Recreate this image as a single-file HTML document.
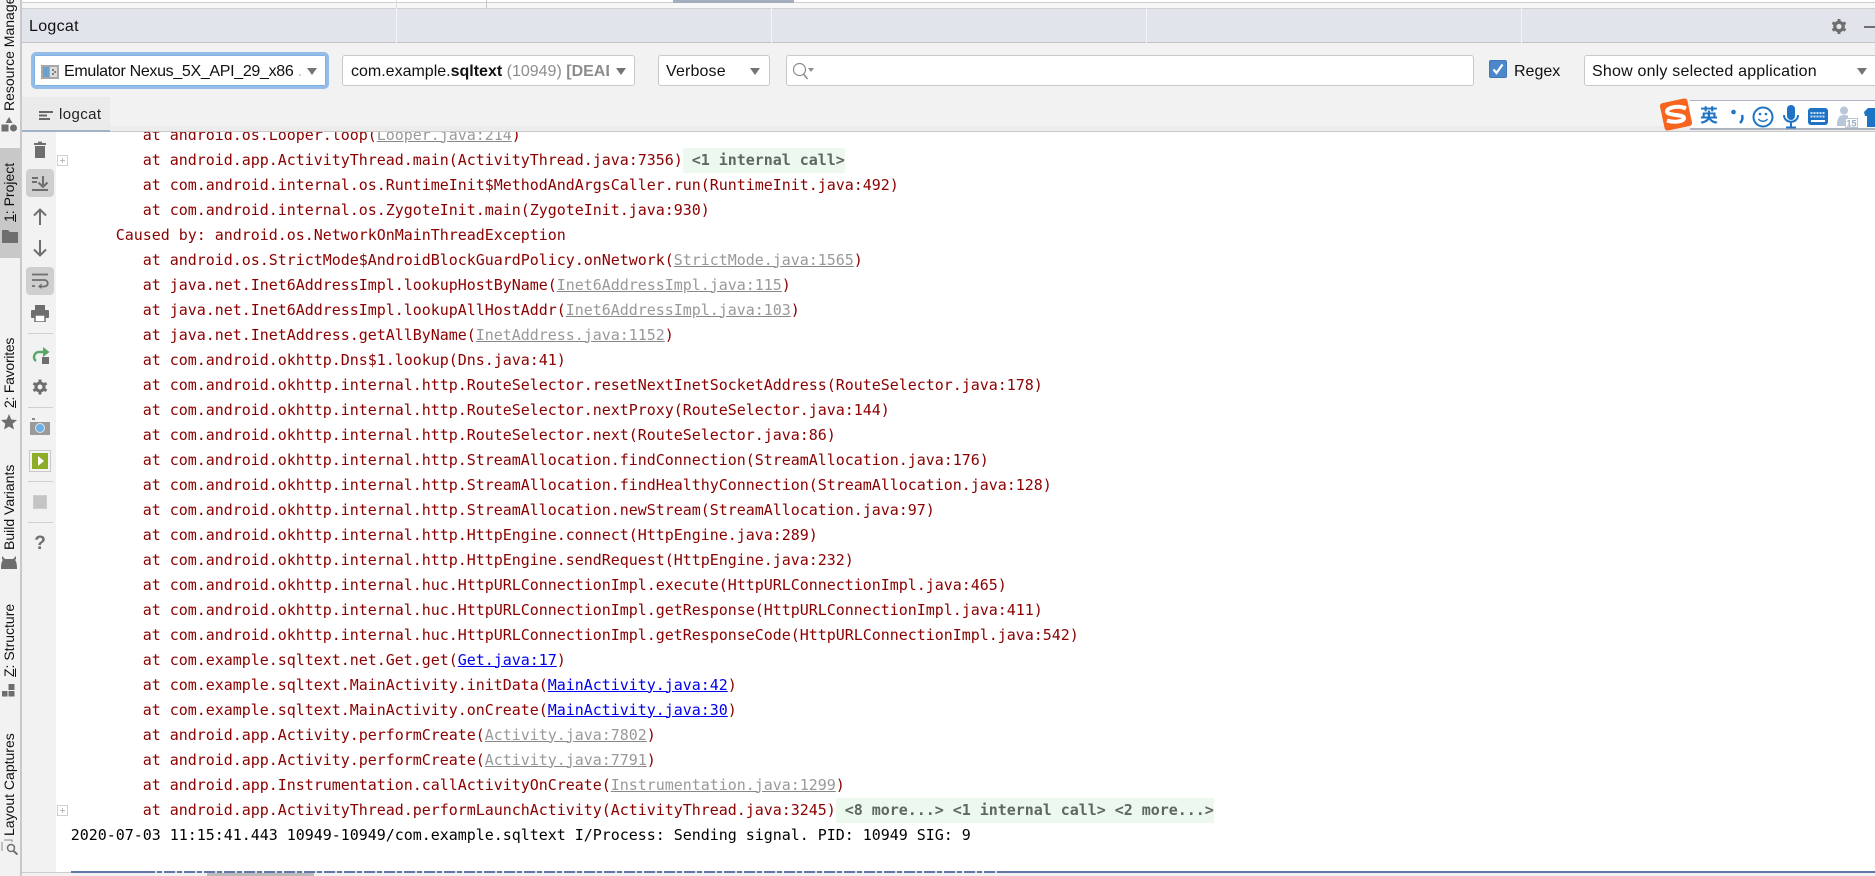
<!DOCTYPE html>
<html><head><meta charset="utf-8"><title>Logcat</title>
<style>
*{box-sizing:border-box}
html,body{margin:0;padding:0;width:1875px;height:876px;overflow:hidden;background:#fff}
body{position:relative;font-family:"Liberation Sans",sans-serif;color:#000}
.a{position:absolute}
.combo{position:absolute;background:#fff;border:1px solid #c9c9c9;border-radius:3px;height:31px;top:55px;font-size:16px;line-height:31px;white-space:nowrap;overflow:hidden}
.arrow{position:absolute;width:0;height:0;border-left:5.5px solid transparent;border-right:5.5px solid transparent;border-top:7px solid #757575;top:68px}
.v{position:absolute;transform-origin:0 0;transform:rotate(-90deg);font-size:14px;line-height:16px;white-space:nowrap;left:1px;color:#111}
.sep{position:absolute;left:28px;width:25px;height:1px;background:#d0d0d0}
#log{position:absolute;left:56px;top:132px;width:1819px;height:739px;overflow:hidden;background:#fff}
#log pre{position:absolute;left:14.8px;top:-9.5px;margin:0;font-family:"DejaVu Sans Mono",monospace;font-size:15px;line-height:25px;letter-spacing:-.031px;color:#8b0000}
#log a{color:#999;text-decoration:underline;text-decoration-color:#888}
#log a.b{color:#0000ee;text-decoration-color:#0000ee}
#log b{display:inline-block;height:25px;background:#edf8ee;color:#5f675f;font-weight:bold;padding:0}
#log i{font-style:normal;color:#000}
.plus{position:absolute;left:57px;width:11px;height:11px;border:1px solid #d0d0d0;background:#fff}
.plus:before{content:"";position:absolute;left:2px;top:4px;width:5px;height:1px;background:#bbb}
.plus:after{content:"";position:absolute;left:4px;top:2px;width:1px;height:5px;background:#bbb}
</style></head><body>

<!-- top strip -->
<div class="a" style="left:0;top:0;width:1875px;height:8px;background:#f7f7f7"></div>
<div class="a" style="left:0;top:0;width:1875px;height:3px;background:#fff;border-bottom:1px solid #cfcfcf"></div>
<div class="a" style="left:673px;top:0;width:121px;height:3px;background:#a2adbd"></div>
<div class="a" style="left:486px;top:0;width:1px;height:8px;background:#c8c8c8"></div>
<div class="a" style="left:396px;top:0;width:1px;height:8px;background:#ddd"></div>

<!-- header -->
<div class="a" style="left:21px;top:8px;width:1854px;height:35px;background:#e1e4eb;border-top:1px solid #cfcfcf;border-bottom:1px solid #c4c4c4"></div>
<div class="a" style="left:396px;top:8px;width:1px;height:35px;background:#f2f3f6"></div>
<div class="a" style="left:771px;top:8px;width:1px;height:35px;background:#f2f3f6"></div>
<div class="a" style="left:1146px;top:8px;width:1px;height:35px;background:#f2f3f6"></div>
<div class="a" style="left:1521px;top:8px;width:1px;height:35px;background:#f2f3f6"></div>
<div class="a" style="left:29px;top:17px;font-size:16px;line-height:20px;color:#111;letter-spacing:.3px">Logcat</div>
<svg class="a" style="left:1830px;top:18px" width="18" height="17" viewBox="0 0 18 17"><g fill="none" stroke="#6e6e6e"><circle cx="9" cy="8.5" r="4.2" stroke-width="3.2"/><path stroke-width="3" d="M9 1v3M9 13v3M2.5 4.7l2.6 1.5M12.9 10.8l2.6 1.5M2.5 12.3l2.6-1.5M12.9 6.2l2.6-1.5"/></g></svg>
<div class="a" style="left:1864px;top:26px;width:11px;height:2px;background:#6e6e6e"></div>

<!-- toolbar -->
<div class="a" style="left:21px;top:43px;width:1854px;height:88px;background:#f2f2f2"></div>

<div class="a" style="left:31px;top:52px;width:298px;height:37px;border:3px solid #93bde8;border-radius:5px;background:#fff;box-shadow:inset 0 0 0 1px #7fb0e3"></div>
<svg class="a" style="left:41px;top:65px" width="18" height="14" viewBox="0 0 18 14"><rect width="18" height="14" fill="#a8a8a8"/><rect x="2" y="2" width="6" height="10" fill="#6aa2cc"/><rect x="9" y="2" width="7" height="10" fill="#dcdcdc"/><circle cx="12" cy="5" r="1" fill="#666"/><circle cx="12" cy="9" r="1" fill="#666"/><circle cx="14" cy="7" r="1" fill="#666"/></svg>
<div class="a" style="left:64px;top:57px;font-size:16px;line-height:29px;white-space:nowrap;color:#111;letter-spacing:-.32px">Emulator Nexus_5X_API_29_x86 <span style="color:#bbb">.</span></div>
<div class="arrow" style="left:307px"></div>

<div class="combo" style="left:342px;width:293px;padding-left:8px;color:#111"><span style="display:inline-block;width:258px;overflow:hidden;vertical-align:top">com.example.<b>sqltext</b> <span style="color:#8c8c8c">(10949)</span> <b style="color:#8c8c8c">[DEAD]</b></span></div>
<div class="arrow" style="left:616px"></div>

<div class="combo" style="left:658px;width:112px;padding-left:7px;color:#111;letter-spacing:.15px">Verbose</div>
<div class="arrow" style="left:750px"></div>

<div class="combo" style="left:786px;width:688px"></div>
<svg class="a" style="left:792px;top:62px" width="22" height="18" viewBox="0 0 22 18"><circle cx="7.5" cy="7.5" r="6" fill="none" stroke="#8c8c8c" stroke-width="1.2"/><path d="M11.5 12l4 5" stroke="#8c8c8c" stroke-width="1.5"/><path d="M16 6h6l-3 4z" fill="#8c8c8c"/></svg>

<div class="a" style="left:1489px;top:60px;width:18px;height:18px;background:#4c87c9;border-radius:2px;border:1px solid #3f78b8"></div>
<svg class="a" style="left:1489px;top:60px" width="18" height="18" viewBox="0 0 18 18"><path d="M4.5 9.500l3 3.500 6-8.500" fill="none" stroke="#fff" stroke-width="2.200"/></svg>
<div class="a" style="left:1514px;top:57px;font-size:16px;line-height:29px;color:#111">Regex</div>

<div class="combo" style="left:1584px;width:300px;padding-left:7px;color:#111;letter-spacing:.2px">Show only selected application</div>
<div class="arrow" style="left:1857px"></div>

<!-- tab -->
<div class="a" style="left:22px;top:97px;width:88px;height:34px;background:#ebebeb"></div>
<div class="a" style="left:21px;top:131px;width:1854px;height:1px;background:#c9c9c9"></div>
<div class="a" style="left:22px;top:130px;width:88px;height:2px;background:#a2b2c8"></div>
<div class="a" style="left:110px;top:126px;width:1765px;height:5px;background:#ececec"></div>
<svg class="a" style="left:39px;top:110px" width="14" height="12" viewBox="0 0 14 12"><path d="M0 2h14M0 5.500h8M0 9h11" stroke="#666" stroke-width="2"/></svg>
<div class="a" style="left:59px;top:105px;font-size:15px;line-height:20px;color:#222;letter-spacing:.4px">logcat</div>

<!-- left strip -->
<div class="a" style="left:0;top:0;width:20px;height:876px;background:#f2f2f2"></div>
<div class="a" style="left:20px;top:0;width:2px;height:876px;background:#c9c9c9"></div>
<div class="a" style="left:0;top:148px;width:20px;height:110px;background:#c8c8c8"></div>
<div class="a" style="left:22px;top:132px;width:34px;height:744px;background:#f2f2f2"></div>

<div class="v" style="top:111px">Resource Manager</div>
<svg class="a" style="left:1px;top:117px" width="16" height="15" viewBox="0 0 16 15"><path d="M8 0l3.500 6h-7z" fill="#6e6e6e"/><circle cx="12.500" cy="11" r="3.500" fill="#6e6e6e"/><rect x="0.500" y="7.500" width="7" height="7" fill="#6e6e6e"/></svg>
<div class="v" style="top:222px"><span style="text-decoration:underline">1</span>: Project</div>
<svg class="a" style="left:2px;top:230px" width="16" height="13" viewBox="0 0 16 13"><path d="M0 0h6l2 2h8v11H0z" fill="#6e6e6e"/></svg>
<div class="v" style="top:408px;letter-spacing:-.25px"><span style="text-decoration:underline">2</span>: Favorites</div>
<svg class="a" style="left:1px;top:414px" width="16" height="16" viewBox="0 0 16 16"><path d="M8 0l2.300 5.500 5.700.5-4.300 3.800 1.300 5.700-5-3-5 3 1.300-5.700L0 6l5.700-.5z" fill="#6e6e6e"/></svg>
<div class="v" style="top:550px">Build Variants</div>
<svg class="a" style="left:1px;top:556px" width="16" height="13" viewBox="0 0 16 13"><path d="M1 0l3 3h8l3-3v3l-1 1c1 1 2 3 2 9H0c0-6 1-8 2-9L1 3z" fill="#6e6e6e"/></svg>
<div class="v" style="top:836px">Layout Captures</div>
<div class="v" style="top:677px"><span style="text-decoration:underline">Z</span>: Structure</div>
<svg class="a" style="left:2px;top:684px" width="13" height="13" viewBox="0 0 13 13"><rect x="6.500" y="0" width="6" height="6" fill="#6e6e6e"/><rect x="0" y="7" width="5.500" height="5.500" fill="#6e6e6e"/><rect x="6.500" y="7" width="6" height="5.500" fill="#6e6e6e"/></svg>
<svg class="a" style="left:1px;top:839px" width="17" height="16" viewBox="0 0 17 16"><path d="M3 1h8v2M1 3v9" fill="none" stroke="#8a8a8a"/><circle cx="10" cy="9" r="3.500" fill="none" stroke="#6e6e6e" stroke-width="1.500"/><path d="M12.500 12l4 3.500" stroke="#6e6e6e" stroke-width="2"/></svg>

<!-- tool icons -->
<svg class="a" style="left:33px;top:141px" width="14" height="17" viewBox="0 0 14 17"><path d="M1 2h4V.6h4V2h4v2H1z M2 5h10v12H2z" fill="#6e6e6e"/></svg>
<div class="a" style="left:26px;top:169px;width:28px;height:28px;background:#cfcfcf;border-radius:4px"></div>
<svg class="a" style="left:32px;top:176px" width="16" height="15" viewBox="0 0 16 15"><path d="M0 2h6M0 6h5M0 14h16" stroke="#6e6e6e" stroke-width="2"/><path d="M11 0v9" stroke="#6e6e6e" stroke-width="2"/><path d="M6.500 6.500L11 11l4.500-4.500" fill="none" stroke="#6e6e6e" stroke-width="2"/></svg>
<svg class="a" style="left:33px;top:208px" width="14" height="17" viewBox="0 0 14 17"><path d="M7 1.500V17M1 7.500l6-6 6 6" fill="none" stroke="#6e6e6e" stroke-width="2"/></svg>
<svg class="a" style="left:33px;top:240px" width="14" height="17" viewBox="0 0 14 17"><path d="M7 0v15.500M1 9.500l6 6 6-6" fill="none" stroke="#6e6e6e" stroke-width="2"/></svg>
<div class="a" style="left:26px;top:267px;width:28px;height:28px;background:#cfcfcf;border-radius:4px"></div>
<svg class="a" style="left:32px;top:273px" width="17" height="16" viewBox="0 0 17 16"><path d="M0 1.500h16M0 7h12.500a3 3 0 0 1 0 6.500H7M0 13h3" fill="none" stroke="#6e6e6e" stroke-width="1.800"/><path d="M9.500 10.500l-3.500 3 3.500 2.500z" fill="#6e6e6e"/></svg>
<svg class="a" style="left:31px;top:305px" width="18" height="17" viewBox="0 0 18 17"><rect x="4" y="0" width="10" height="5" fill="#6e6e6e"/><rect x="0" y="5" width="18" height="8" rx="1" fill="#6e6e6e"/><rect x="4" y="10" width="10" height="7" fill="#fff" stroke="#6e6e6e" stroke-width="1.500"/></svg>
<div class="sep" style="top:333px"></div>
<svg class="a" style="left:32px;top:347px" width="18" height="18" viewBox="0 0 18 18"><path d="M12 5H7a5 5 0 0 0-3 9" fill="none" stroke="#59a869" stroke-width="2.500"/><path d="M11 0l6.500 5L11 10z" fill="#59a869"/><rect x="10" y="10" width="7" height="7" fill="#6e6e6e"/></svg>
<svg class="a" style="left:32px;top:379px" width="16" height="16" viewBox="0 0 18 18"><g fill="none" stroke="#6e6e6e"><circle cx="9" cy="9" r="4.500" stroke-width="3.500"/><path stroke-width="3.200" d="M9 .5v4M9 13.500v4M1.600 4.750l3.500 2M12.900 11.250l3.500 2M1.600 13.250l3.500-2M12.900 6.750l3.500-2"/></g></svg>
<div class="sep" style="top:407px"></div>
<svg class="a" style="left:30px;top:418px" width="20" height="17" viewBox="0 0 20 17"><path d="M2 0h3v2H2z" fill="#8a8a8a"/><rect x="0" y="4" width="20" height="13" fill="#9a9a9a"/><circle cx="10" cy="10" r="4.500" fill="#6cb0e6" stroke="#dfe8ef"/></svg>
<div class="a" style="left:30px;top:451px;width:20px;height:20px;background:#8cad25;border:2px solid #f4f4f4;outline:1px solid #c9c9c9"></div>
<svg class="a" style="left:37px;top:456px" width="8" height="10" viewBox="0 0 8 10"><path d="M1 0l6 5-6 5z" fill="#fff"/></svg>
<div class="sep" style="top:481px"></div>
<div class="a" style="left:34px;top:496px;width:12px;height:12px;background:#c4c4c4;box-shadow:0 0 0 1px #cdcdcd"></div>
<div class="sep" style="top:522px"></div>
<div class="a" style="left:33px;top:532px;width:14px;font-size:19px;line-height:24px;font-weight:bold;color:#6e6e6e;text-align:center">?</div>

<!-- log -->
<div id="log"><pre>        at android.os.Looper.loop(<a>Looper.java:214</a>)
        at android.app.ActivityThread.main(ActivityThread.java:7356)<b> &lt;1 internal call&gt;</b>
        at com.android.internal.os.RuntimeInit$MethodAndArgsCaller.run(RuntimeInit.java:492)
        at com.android.internal.os.ZygoteInit.main(ZygoteInit.java:930)
     Caused by: android.os.NetworkOnMainThreadException
        at android.os.StrictMode$AndroidBlockGuardPolicy.onNetwork(<a>StrictMode.java:1565</a>)
        at java.net.Inet6AddressImpl.lookupHostByName(<a>Inet6AddressImpl.java:115</a>)
        at java.net.Inet6AddressImpl.lookupAllHostAddr(<a>Inet6AddressImpl.java:103</a>)
        at java.net.InetAddress.getAllByName(<a>InetAddress.java:1152</a>)
        at com.android.okhttp.Dns$1.lookup(Dns.java:41)
        at com.android.okhttp.internal.http.RouteSelector.resetNextInetSocketAddress(RouteSelector.java:178)
        at com.android.okhttp.internal.http.RouteSelector.nextProxy(RouteSelector.java:144)
        at com.android.okhttp.internal.http.RouteSelector.next(RouteSelector.java:86)
        at com.android.okhttp.internal.http.StreamAllocation.findConnection(StreamAllocation.java:176)
        at com.android.okhttp.internal.http.StreamAllocation.findHealthyConnection(StreamAllocation.java:128)
        at com.android.okhttp.internal.http.StreamAllocation.newStream(StreamAllocation.java:97)
        at com.android.okhttp.internal.http.HttpEngine.connect(HttpEngine.java:289)
        at com.android.okhttp.internal.http.HttpEngine.sendRequest(HttpEngine.java:232)
        at com.android.okhttp.internal.huc.HttpURLConnectionImpl.execute(HttpURLConnectionImpl.java:465)
        at com.android.okhttp.internal.huc.HttpURLConnectionImpl.getResponse(HttpURLConnectionImpl.java:411)
        at com.android.okhttp.internal.huc.HttpURLConnectionImpl.getResponseCode(HttpURLConnectionImpl.java:542)
        at com.example.sqltext.net.Get.get(<a class="b">Get.java:17</a>)
        at com.example.sqltext.MainActivity.initData(<a class="b">MainActivity.java:42</a>)
        at com.example.sqltext.MainActivity.onCreate(<a class="b">MainActivity.java:30</a>)
        at android.app.Activity.performCreate(<a>Activity.java:7802</a>)
        at android.app.Activity.performCreate(<a>Activity.java:7791</a>)
        at android.app.Instrumentation.callActivityOnCreate(<a>Instrumentation.java:1299</a>)
        at android.app.ActivityThread.performLaunchActivity(ActivityThread.java:3245)<b> &lt;8 more...&gt; &lt;1 internal call&gt; &lt;2 more...&gt;</b>
<i>2020-07-03 11:15:41.443 10949-10949/com.example.sqltext I/Process: Sending signal. PID: 10949 SIG: 9</i></pre></div>
<div class="plus" style="left:57px;top:155px"></div>
<div class="plus" style="left:57px;top:805px"></div>

<!-- bottom -->
<div class="a" style="left:22px;top:872px;width:1853px;height:1px;background:#ccc"></div>
<div class="a" style="left:71px;top:871px;width:1804px;height:2px;background:#5f77aa"></div>
<div class="a" style="left:144px;top:871px;width:858px;height:2px;background:repeating-linear-gradient(90deg,#5f77aa 0 11px,#e8ddd0 11px 13px,#5f77aa 13px 18px,#f0f0f0 18px 20px)"></div>
<div class="a" style="left:22px;top:873px;width:1853px;height:3px;background:#f2f2f2"></div>
<div class="a" style="left:207px;top:873px;width:107px;height:3px;background:#bababa"></div>

<!-- sogou -->
<div class="a" style="left:1690px;top:100px;width:185px;height:30px;background:#fff;border-top:1px solid #aeb4c0;border-bottom:2px solid #aeb4c0"></div>
<svg class="a" style="left:1658px;top:97px" width="36" height="35" viewBox="0 0 36 35"><rect x="4" y="3.500" width="28" height="28" rx="3" transform="rotate(-12 18 17.500)" fill="#f6641e"/><path d="M28 11.500C20 8 9 10.500 9 14.500c0 4.500 17 2.500 17 6.500 0 3.500-10 5-17 2.500" fill="none" stroke="#fff" stroke-width="4"/></svg>
<div class="a" style="left:1700px;top:104px;font-family:'Liberation Sans','Noto Sans CJK SC',sans-serif;font-weight:bold;font-size:18px;line-height:24px;color:#1e73c4">英</div>
<svg class="a" style="left:1730px;top:106px" width="14" height="22" viewBox="0 0 14 22"><circle cx="3.500" cy="6" r="2.300" fill="#1e73c4"/><path d="M12 9c1 3 0 6-2 8" fill="none" stroke="#1e73c4" stroke-width="2.500"/></svg>
<svg class="a" style="left:1752px;top:106px" width="22" height="22" viewBox="0 0 22 22"><circle cx="11" cy="11" r="9.500" fill="none" stroke="#1e73c4" stroke-width="2"/><circle cx="8" cy="8" r="1.300" fill="#1e73c4"/><circle cx="14" cy="8" r="1.300" fill="#1e73c4"/><path d="M6.500 13c2 3 7 3 9 0" fill="none" stroke="#1e73c4" stroke-width="1.500"/></svg>
<svg class="a" style="left:1783px;top:105px" width="16" height="24" viewBox="0 0 16 24"><rect x="4" y="0" width="8" height="15" rx="4" fill="#1e73c4"/><path d="M1 10c0 9 14 9 14 0M8 17v5M3 22.500h10" fill="none" stroke="#1e73c4" stroke-width="2"/></svg>
<svg class="a" style="left:1808px;top:108px" width="20" height="17" viewBox="0 0 20 17"><rect width="20" height="17" rx="3" fill="#1e73c4"/><path d="M2.500 5h15M2.500 8.500h15" stroke="#cfe2f5" stroke-width="2" stroke-dasharray="2 1"/><path d="M3 13h14" stroke="#fff" stroke-width="2"/></svg>
<svg class="a" style="left:1837px;top:106px" width="21" height="22" viewBox="0 0 21 22"><circle cx="7" cy="4.500" r="4" fill="#b9c6d8"/><path d="M0 20c0-9 3-11 7-11s4 1 4 1v10z" fill="#b9c6d8"/><rect x="8.500" y="12.500" width="12" height="9" fill="#fff" stroke="#b9c6d8"/><text x="9.500" y="20.500" font-family="Liberation Sans" font-size="9" font-weight="bold" fill="#9aabc2">15</text></svg>
<svg class="a" style="left:1864px;top:107px" width="11" height="20" viewBox="0 0 11 20"><path d="M0 5l4-4h7v19H3V9H1z" fill="#1e73c4"/></svg>

</body></html>
